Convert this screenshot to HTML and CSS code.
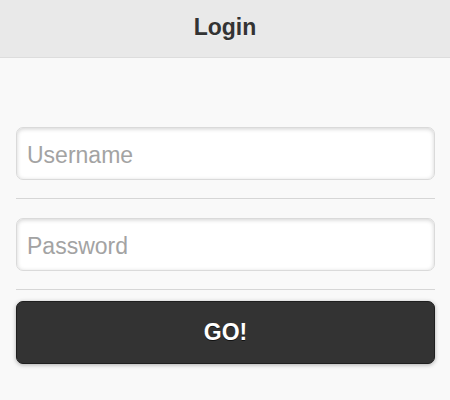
FILE: index.html
```html
<!DOCTYPE html>
<html>
<head>
<meta charset="utf-8">
<link rel="stylesheet" href="styles.css">
</head>
<body>
<div class="page">
  <header class="header"><h1 class="title">Login</h1></header>
  <main class="content">
    <div class="field first"><input class="input" type="text" placeholder="Username"></div>
    <div class="field"><input class="input" type="password" placeholder="Password"></div>
    <button class="btn" type="button">GO!</button>
  </main>
</div>
</body>
</html>
```
FILE: styles.css
```css
* { box-sizing: border-box; }
html, body { margin: 0; padding: 0; }
body {
  background: #f9f9f9;
  font-family: "Liberation Sans", Arial, sans-serif;
  width: 450px;
  height: 400px;
  overflow: hidden;
}
.header {
  background: #e9e9e9;
  border-bottom: 1px solid #dddddd;
  height: 58px;
  display: flex;
  align-items: center;
  justify-content: center;
}
.title {
  margin: 0;
  font-size: 23px;
  font-weight: bold;
  color: #333;
  text-shadow: 0 1px 0 #eee;
  padding-bottom: 3px;
}
.content {
  padding: 69px 15px 0 16px;
  display: flex;
  flex-direction: column;
}
.field {
  padding: 19px 0 18px;
  border-bottom: 1px solid #d6d6d6;
}
.field.first { padding-top: 0; }
.input {
  display: block;
  width: 100%;
  height: 53px;
  margin: 0;
  border: 1px solid #dadada;
  border-radius: 7px;
  background: #fff;
  box-shadow: inset 0 1px 4px rgba(0,0,0,0.18);
  padding: 3px 10px 0;
  font-family: "Liberation Sans", Arial, sans-serif;
  font-size: 23px;
  color: #333;
  outline: none;
}
.input::placeholder { color: #a3a3a3; }
.btn {
  margin-top: 11px;
  height: 63px;
  width: 100%;
  background: #333333;
  border: 1px solid #1f1f1f;
  border-radius: 7px;
  box-shadow: 0 1px 4px rgba(0,0,0,0.3);
  color: #fff;
  font-family: "Liberation Sans", Arial, sans-serif;
  font-size: 23px;
  font-weight: bold;
  text-shadow: 0 1px 0 #111;
  padding: 0;
}
```
